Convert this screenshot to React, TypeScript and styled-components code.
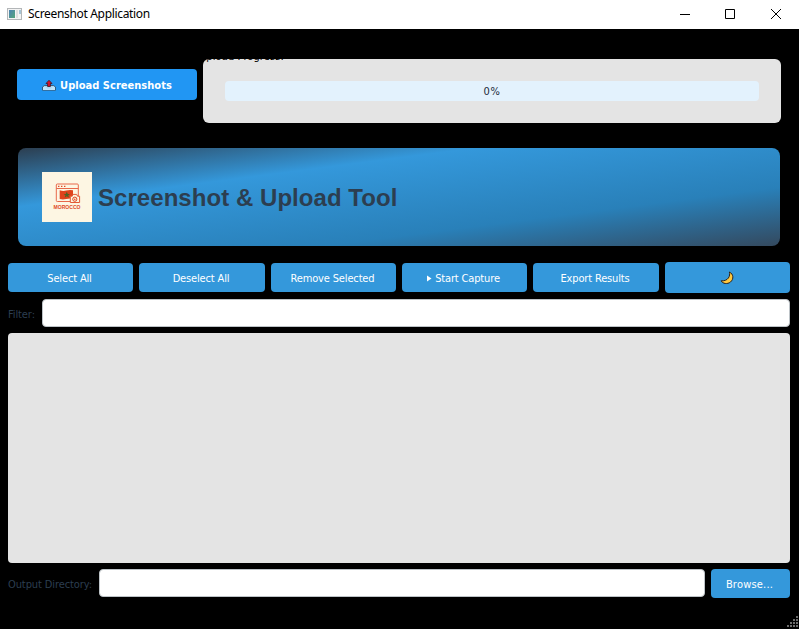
import React from "react";
import styled, { createGlobalStyle } from "styled-components";

const GlobalStyle = createGlobalStyle`
  * { box-sizing: border-box; }
  html, body { margin: 0; padding: 0; background: #000; overflow: hidden; }
  button, input { font: inherit; }
`;

const Window = styled.div`
  display: flex;
  flex-direction: column;
  width: 799px;
  height: 629px;
  background: #000;
  font-family: "DejaVu Sans Condensed", "DejaVu Sans", sans-serif;
  font-stretch: condensed;
  font-size: 11px;
`;

const TitleBar = styled.header`
  display: flex;
  align-items: center;
  flex: none;
  height: 29px;
  padding-left: 7px;
  background: #fff;
  svg { display: block; }
`;

const WindowTitle = styled.span`
  flex: 1;
  margin-left: 6px;
  padding-bottom: 1px;
  font: 12px/16px "Noto Sans", sans-serif;
  letter-spacing: -0.33px;
  color: #000;
  white-space: nowrap;
`;

const WindowControls = styled.div`
  display: flex;
  gap: 34px;
  padding: 0 17px 2px 0;
`;

const UploadRow = styled.section`
  display: flex;
  align-items: flex-start;
  gap: 6px;
  height: 64px;
  margin: 30px 18px 0 17px;
`;

const UploadButton = styled.button`
  display: flex;
  align-items: center;
  justify-content: center;
  gap: 4px;
  width: 180px;
  height: 31px;
  margin-top: 10px;
  padding: 1px 0 0;
  border: 0;
  border-radius: 4px;
  background: #2196f3;
  color: #fff;
  font-weight: bold;
  letter-spacing: 0.03px;
  white-space: nowrap;
`;

const ProgressGroup = styled.div`
  position: relative;
  flex: 1;
  height: 64px;
  padding: 22px;
  border-radius: 6px;
  background: #e4e4e4;
  overflow: hidden;
`;

const ProgressCaption = styled.span`
  position: absolute;
  left: -4px;
  top: -9px;
  line-height: 14px;
  letter-spacing: 0.1px;
  color: #000;
  white-space: nowrap;
`;

const ProgressTrack = styled.div`
  height: 20px;
  border-radius: 4px;
  background: #e3f2fd;
  color: #1b2a3a;
  line-height: 22px;
  letter-spacing: 0.6px;
  text-align: center;
`;

const Banner = styled.section`
  display: flex;
  align-items: center;
  gap: 6px;
  height: 98px;
  margin: 25px 19px 0 18px;
  padding: 0 24px;
  border-radius: 8px;
  background: linear-gradient(to bottom right, #2c3e50 0%, #3498db 30%, #2980b9 70%, #34495e 100%);
  svg { display: block; flex: none; }
`;

const BannerTitle = styled.h1`
  margin: 0;
  padding-top: 1px;
  font: bold 24px/30px "Liberation Sans", Arial, sans-serif;
  letter-spacing: 0.05px;
  color: #2c3e50;
  white-space: nowrap;
`;

const ActionRow = styled.section`
  display: grid;
  grid-template-columns: 125px 126px 125px 125px 126px 125px;
  align-items: center;
  gap: 6px;
  height: 31px;
  margin: 16px 9px 0 8px;
`;

const ActionButton = styled.button<{ $height?: number; $width?: number; $tracking?: number }>`
  display: flex;
  align-items: center;
  justify-content: center;
  gap: 3px;
  flex: none;
  width: ${(p) => (p.$width ? `${p.$width}px` : "100%")};
  height: ${(p) => p.$height ?? 29}px;
  padding: 1px 2px 0 0;
  border: 0;
  border-radius: 4px;
  background: #3498db;
  color: #fff;
  letter-spacing: ${(p) => p.$tracking ?? -0.15}px;
  white-space: nowrap;
`;

const FieldRow = styled.section`
  display: flex;
  height: 29px;
  margin: 6px 9px 0 8px;
`;

const FieldLabel = styled.label<{ $width: number }>`
  flex: none;
  width: ${(p) => p.$width}px;
  line-height: 31px;
  color: #2c3e50;
  letter-spacing: -0.1px;
  white-space: nowrap;
`;

const TextField = styled.input`
  flex: 1;
  min-width: 0;
  height: 28px;
  padding: 0 6px;
  border: 1px solid #bdc3c7;
  border-radius: 4px;
  background: #fff;
  outline: none;
`;

const BrowseSlot = styled.div`
  margin-left: 6px;
`;

const ResultsList = styled.main`
  height: 230px;
  margin: 5px 9px 0 8px;
  border-radius: 4px;
  background: #e4e4e4;
`;

const StatusBar = styled.footer`
  display: flex;
  flex: 1;
  align-items: flex-end;
  justify-content: flex-end;
  padding-bottom: 1px;
  svg { display: block; }
`;

const AppIcon = () => (
  <svg width="15" height="14" viewBox="0 0 15 14" shapeRendering="crispEdges">
    <defs>
      <linearGradient id="pane" x1="0" y1="0" x2="1" y2="1">
        <stop offset="0" stopColor="#4c82b4" />
        <stop offset="1" stopColor="#55a779" />
      </linearGradient>
    </defs>
    <path d="M0 0h15v12H0z" fill="#b3b6b8" />
    <path d="M1 1h13v10H1z" fill="#f4f4f4" />
    <path d="M2 2h6v8H2z" fill="url(#pane)" />
    <path d="M9 2h2v8H9z" fill="#e0e0e0" />
    <path d="M12 2h2v4h-2z" fill="#a6c5d5" />
  </svg>
);

const UploadIcon = () => (
  <svg width="14" height="12" viewBox="0 0 14 12">
    <path d="M2.5 6.5h9L13.5 8v3.2H.5V8z" fill="#a9d6f2" stroke="#24384a" strokeWidth=".7" />
    <path d="M1 8h3l1 1.5h4L10 8h3v3H1z" fill="#bfe4fa" />
    <path d="M7 1.3 10 4.5H8.4v3H5.6v-3H4z" fill="#d5132c" stroke="#401522" strokeWidth=".8" />
  </svg>
);

const MoonIcon = () => (
  <svg width="14" height="14" viewBox="0 0 14 14">
    <path d="M9.4 1c4.1 2 4.7 7 1 10.1-3 2.3-7.6 1.8-9.3-1.3 3 .3 5.8-.7 7.3-2.8C9.8 5 9.8 3 9.4 1z" fill="#ffc83d" stroke="#2b211c" strokeWidth="1" strokeLinejoin="round" />
  </svg>
);

const MoroccoLogo = () => (
  <svg width="50" height="50" viewBox="0 0 50 50">
    <path d="M0 0h50v50H0z" fill="#fdf6e3" />
    <g fill="none" stroke="#e8694a" strokeWidth="1">
      <rect x="14.3" y="12" width="22" height="17.5" rx="1" />
      <path d="M14.3 16.5h22" />
    </g>
    <path d="M16 13.8h1.4v1.3H16zM19 13.8h1.4v1.3H19zM22 13.8h1.4v1.3H22z" fill="#e24b26" />
    <path d="M17.7 18.3q3.5 1.2 6.5.3t6.8-.3v8.5q-3.5-.5-6.8.3t-6.5 0z" fill="#df431d" />
    <path d="m24.8 19.7 1 2.2h2.2l-1.7 1.4.6 2.3-2.1-1.3-2 1.3.6-2.3-1.8-1.4h2.2z" fill="#4c6426" />
    <path d="M28.3 24.2h1.9l.9-1.8h3.6l.8 1.8h2.1v6.3h-9.3z" fill="#fdf6e3" stroke="#e35a36" />
    <circle cx="32.8" cy="27.2" r="2.1" fill="#fdf6e3" stroke="#df431d" />
    <circle cx="32.8" cy="27.2" r=".8" fill="#df431d" />
    <text x="11.5" y="37" textLength="27" lengthAdjust="spacingAndGlyphs" fill="#e04a25" fontFamily="Liberation Sans, sans-serif" fontWeight="700" fontSize="5.6">MOROCCO</text>
  </svg>
);

const SizeGrip = () => (
  <svg width="12" height="12" viewBox="0 0 12 12" fill="#6b6b6b" shapeRendering="crispEdges">
    <path d="M9 0h2v2H9zM6 3h2v2H6zM9 3h2v2H9zM3 6h2v2H3zM6 6h2v2H6zM9 6h2v2H9zM0 9h2v2H0zM3 9h2v2H3zM6 9h2v2H6zM9 9h2v2H9z" />
  </svg>
);

export default function App() {
  return (
    <>
      <GlobalStyle />
      <Window>
        <TitleBar>
          <AppIcon />
          <WindowTitle>Screenshot Application</WindowTitle>
          <WindowControls>
            <svg width="12" height="12" stroke="#000"><path d="M2 6.5h10" /></svg>
            <svg width="12" height="12" fill="none" stroke="#000"><path d="M1.5 1.5h9v9h-9z" /></svg>
            <svg width="12" height="12" stroke="#000"><path d="m1 1 10 10M11 1 1 11" /></svg>
          </WindowControls>
        </TitleBar>
        <UploadRow>
          <UploadButton><UploadIcon />Upload Screenshots</UploadButton>
          <ProgressGroup>
            <ProgressCaption>Upload Progress:</ProgressCaption>
            <ProgressTrack>0%</ProgressTrack>
          </ProgressGroup>
        </UploadRow>
        <Banner>
          <MoroccoLogo />
          <BannerTitle>Screenshot &amp; Upload Tool</BannerTitle>
        </Banner>
        <ActionRow>
          <ActionButton>Select All</ActionButton>
          <ActionButton>Deselect All</ActionButton>
          <ActionButton>Remove Selected</ActionButton>
          <ActionButton>
            <svg width="5" height="7" fill="#fff"><path d="M0 .5v6l4.5-3z" /></svg>
            Start Capture
          </ActionButton>
          <ActionButton>Export Results</ActionButton>
          <ActionButton $height={31} aria-label="Dark mode"><MoonIcon /></ActionButton>
        </ActionRow>
        <FieldRow>
          <FieldLabel $width={34} htmlFor="filter">Filter:</FieldLabel>
          <TextField id="filter" />
        </FieldRow>
        <ResultsList />
        <FieldRow>
          <FieldLabel $width={91} htmlFor="output">Output Directory:</FieldLabel>
          <TextField id="output" />
          <BrowseSlot>
            <ActionButton $width={79} $tracking={0.2}>Browse...</ActionButton>
          </BrowseSlot>
        </FieldRow>
        <StatusBar><SizeGrip /></StatusBar>
      </Window>
    </>
  );
}
